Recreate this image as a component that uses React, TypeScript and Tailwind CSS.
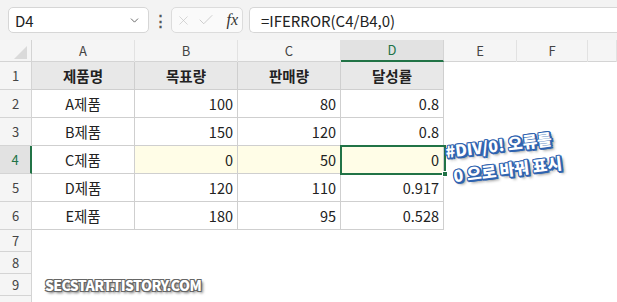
import React from 'react';
import { ChevronDown, X, Check } from 'lucide-react';

const font = { fontFamily: '"Noto Sans CJK KR", "Noto Sans", sans-serif' };

const cols = ['A', 'B', 'C', 'D', 'E', 'F', ''];

const rows = [
  ['제품명', '목표량', '판매량', '달성률'],
  ['A제품', '100', '80', '0.8'],
  ['B제품', '150', '120', '0.8'],
  ['C제품', '0', '50', '0'],
  ['D제품', '120', '110', '0.917'],
  ['E제품', '180', '95', '0.528'],
];

const gridCols = 'grid grid-cols-[32px_103px_103px_103px_103px_73px_71px_1fr]';

const App = () => {
  return (
    <div className="relative w-[617px] h-[302px] overflow-hidden bg-white text-[#222]" style={font}>
      {/* formula bar */}
      <div className="h-[40px] bg-[#f3f3f3] flex items-start pt-[7px] pl-[8px]">
        <div className="w-[141px] h-[26px] bg-white border border-[#d6d6d6] rounded-[5px] flex items-center justify-between pl-[6px] pr-[7px]">
          <span className="text-[15px] leading-none">D4</span>
          <ChevronDown className="w-[13px] h-[13px] text-[#555]" strokeWidth={1.6} />
        </div>
        <div className="w-[22px] h-[26px] flex items-center justify-center text-[#555] text-[15px] font-bold">⋮</div>
        <div className="w-[72px] h-[26px] bg-[#fafafa] border border-[#dcdcdc] rounded-[5px] flex items-center pl-[4px] pr-[4px]">
          <X className="w-[15px] h-[15px] text-[#c4c4c4]" strokeWidth={1.1} />
          <Check className="ml-[6px] w-[18px] h-[18px] text-[#c4c4c4]" strokeWidth={1.1} />
          <span className="ml-auto text-[16px] italic text-[#333] leading-none" style={{ fontFamily: '"Liberation Serif", serif' }}>fx</span>
        </div>
        <div className="ml-[6px] flex-1 h-[26px] bg-white border border-[#d6d6d6] border-r-0 rounded-l-[5px] flex items-center pl-[11px]">
          <span className="text-[15px] leading-none">=IFERROR(C4/B4,0)</span>
        </div>
      </div>

      {/* column headers */}
      <div className={`${gridCols} h-[22px] bg-[#f5f5f5] border-b border-[#d4d4d4] text-[13px] text-[#444]`}>
        <div className="relative border-r border-[#d4d4d4]">
          <div className="absolute right-[4px] bottom-[3px] w-0 h-0 border-l-[13px] border-l-transparent border-b-[13px] border-b-[#dadada]" />
        </div>
        {cols.map((c, i) => (
          <div
            key={i}
            className={
              c === 'D'
                ? 'flex items-center justify-center bg-[#e2e2e2] border-r border-[#d4d4d4] border-b-2 border-b-[#217346] text-[#217346]'
                : 'flex items-center justify-center border-r border-[#e2e2e2]'
            }
          >
            {c}
          </div>
        ))}
      </div>

      {/* data rows */}
      {rows.map((r, ri) => {
        const rowNum = ri + 1;
        const sel = rowNum === 4;
        return (
          <div key={ri} className={`${gridCols} h-[28px] text-[14.5px]`}>
            <div
              className={
                sel
                  ? 'flex items-center justify-center bg-[#e2e2e2] border-r-2 border-r-[#217346] border-b border-[#d4d4d4] text-[13px] text-[#217346]'
                  : 'flex items-center justify-center bg-[#f5f5f5] border-r border-b border-[#d4d4d4] text-[13px] text-[#444]'
              }
            >
              {rowNum}
            </div>
            {r.map((v, ci) => {
              const header = ri === 0;
              const yellow = sel && ci > 0;
              return (
                <div
                  key={ci}
                  className={[
                    'flex items-center border-r border-b border-[#cfcfcf]',
                    header ? 'justify-center bg-[#e8e8e8] font-bold' : ci === 0 ? 'justify-center' : 'justify-end pr-[4px]',
                    yellow ? 'bg-[#fffde7]' : '',
                    !header && !yellow ? 'bg-white' : '',
                  ].join(' ')}
                >
                  {v}
                </div>
              );
            })}
            <div />
            <div />
            <div />
          </div>
        );
      })}

      {[7, 8, 9].map((n) => (
        <div key={n} className={`${gridCols} h-[22px]`}>
          <div className="flex items-center justify-center bg-[#f5f5f5] border-r border-b border-[#d4d4d4] text-[13px] text-[#444]">
            {n}
          </div>
        </div>
      ))}
      <div className={`${gridCols} h-[22px]`}>
        <div className="bg-[#f5f5f5] border-r border-[#d4d4d4]" />
      </div>

      {/* active cell D4 */}
      <div className="absolute left-[340px] top-[145px] w-[106px] h-[30px] border-2 border-[#217346]">
        <div className="absolute right-[-4px] bottom-[-4px] w-[6px] h-[6px] bg-[#217346] border border-white" />
      </div>

      {/* annotation */}
      <div
        className="absolute left-[447px] top-[139px] -rotate-[7deg] origin-left text-white font-black text-[16px] leading-[25px]"
        style={{
          textShadow:
            '1px 1px 0 #2f63b0, -1px -1px 0 #2f63b0, 1px -1px 0 #2f63b0, -1px 1px 0 #2f63b0, 2px 2px 0 #2f63b0, 0 2px 0 #2f63b0, 2px 0 0 #2f63b0, -1px 0 0 #2f63b0, 0 -1px 0 #2f63b0, 3px 3px 3px rgba(0,0,0,0.45)',
        }}
      >
        <div>#DIV/0! 오류를</div>
        <div className="pl-[5px]">0 으로 바꿔 표시</div>
      </div>

      {/* watermark */}
      <div
        className="absolute left-[45px] top-[275px] text-white font-black text-[14px] leading-[20px] tracking-[-0.6px]"
        style={{
          textShadow:
            '1px 1px 0 #666, -1px -1px 0 #666, 1px -1px 0 #666, -1px 1px 0 #666, 2px 2px 3px rgba(0,0,0,0.6)',
        }}
      >
        SECSTART.TISTORY.COM
      </div>
    </div>
  );
};

export default App;
